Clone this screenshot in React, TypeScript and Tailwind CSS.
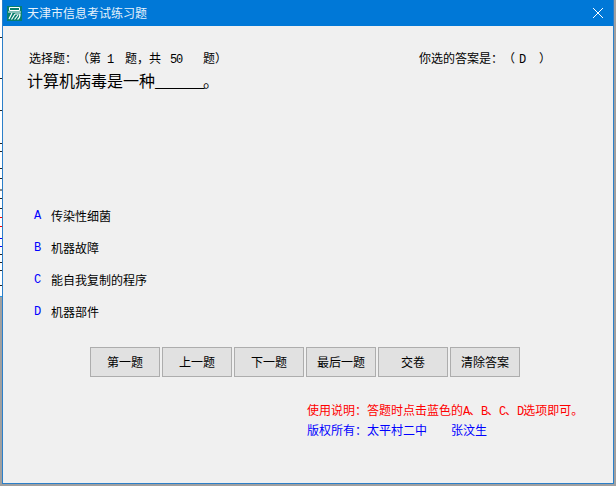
const font = { fontFamily: '"Noto Sans CJK SC", "Liberation Mono", monospace' };

function L({ children }: { children: string }) {
  return <span className="font-['Liberation_Mono'] text-[12px] tracking-[-1.2px] whitespace-pre">{children}</span>;
}

function Btn({ label }: { label: string }) {
  return (
    <div className="w-[70px] h-[30px] flex items-center justify-center bg-[#e1e1e1] border border-[#adadad] text-[12px] text-black leading-none">
      {label}
    </div>
  );
}

function Option({ k, label }: { k: string; label: string }) {
  return (
    <div className="h-[32px] flex items-center">
      <span className="w-[17px] text-[#0000ff] text-[12px] font-['Liberation_Mono']">{k}</span>
      <span className="text-[12px] text-black">{label}</span>
    </div>
  );
}

const ticks: [number, string, number][] = [
  [37, "#222222", 1], [78, "#222222", 1], [110, "#222222", 1], [143, "#222222", 1], [151, "#222222", 1],
  [168, "#222222", 1], [178, "#222222", 1], [189, "#888888", 2], [198, "#222222", 1], [208, "#222222", 1],
  [217, "#ff0000", 1], [226, "#ff0000", 1], [238, "#0000ff", 1], [246, "#0000ff", 1], [254, "#222222", 1],
  [262, "#222222", 1], [270, "#222222", 1], [285, "#222222", 1], [296, "#2b9be8", 1],
];

export default function App() {
  return (
    <div className="w-[616px] h-[486px] flex items-start bg-[#a0a0a0] overflow-hidden [text-spacing-trim:space-all]" style={font}>
      <svg width="2" height="486" className="shrink-0">
        <rect x="0" y="0" width="2" height="297" fill="#ffffff" />
        {ticks.map(([y, c, h]) => (
          <rect key={y} x="0" y={y} width="2" height={h} fill={c} />
        ))}
      </svg>
      <div className="w-[612px] h-[484px] flex flex-col bg-[#f0f0f0] border-x border-b border-[#2b7fc9]">
        <div className="h-[26px] shrink-0 bg-[#0078d7] flex items-center pl-[4px] pr-[10px]">
          <svg width="15" height="15" viewBox="0 0 15 15" className="shrink-0">
            <rect width="15" height="15" fill="#087f6e" />
            <path d="M2.500 1.500h10v3h-10zM1 6h13" stroke="#fff" strokeWidth="1" fill="none" />
            <path d="M5 7l-3 6M8 8h5c0 2.500-.7 4.500-2.500 5.500M8 8l-3.500 5.500M11 9l-3.500 4.500" stroke="#fff" strokeWidth="1.2" fill="none" />
          </svg>
          <span className="ml-[5px] text-[12px] text-[#e6f2fb]">天津市信息考试练习题</span>
          <svg width="10" height="10" viewBox="0 0 10 10" className="ml-auto">
            <path d="M0 0l10 10M10 0L0 10" stroke="#fff" strokeWidth="1" />
          </svg>
        </div>
        <div className="flex-1 flex flex-col pl-[24px]">
          <div className="flex justify-between h-[19px] mt-[22px] ml-[2px] pr-[62px] text-[12px] leading-[19px] text-black">
            <div className="whitespace-pre">
              选择题：（第<L> 1  </L>题，共<span className="pl-[9px] pr-[21px]"><L>50</L></span>题）
            </div>
            <div className="whitespace-pre">
              你选的答案是：（<span className="pl-[4px] pr-[14px]"><L>D</L></span>）
            </div>
          </div>
          <div className="h-[22px] text-[16px] leading-[22px] mt-[2px] text-black">
            计算机病毒是一种<span className="font-['Liberation_Mono'] tracking-[-1.6px]">______</span>。
          </div>
          <div className="mt-[109px] ml-[7px] flex flex-col">
            <Option k="A" label="传染性细菌" />
            <Option k="B" label="机器故障" />
            <Option k="C" label="能自我复制的程序" />
            <Option k="D" label="机器部件" />
          </div>
          <div className="flex gap-[2px] ml-[63px] mt-[19px]">
            <Btn label="第一题" />
            <Btn label="上一题" />
            <Btn label="下一题" />
            <Btn label="最后一题" />
            <Btn label="交卷" />
            <Btn label="清除答案" />
          </div>
          <div className="ml-[280px] mt-[23px] text-[12px] leading-[20px]">
            <div className="h-[20px] text-[#ff0000] whitespace-pre">
              使用说明：答题时点击蓝色的<L>A</L>、<L>B</L>、<L>C</L>、<L>D</L>选项即可。
            </div>
            <div className="h-[20px] text-[#0000ff] whitespace-pre">
              版权所有：太平村二中<L>    </L>张汶生
            </div>
          </div>
        </div>
      </div>
    </div>
  );
}
